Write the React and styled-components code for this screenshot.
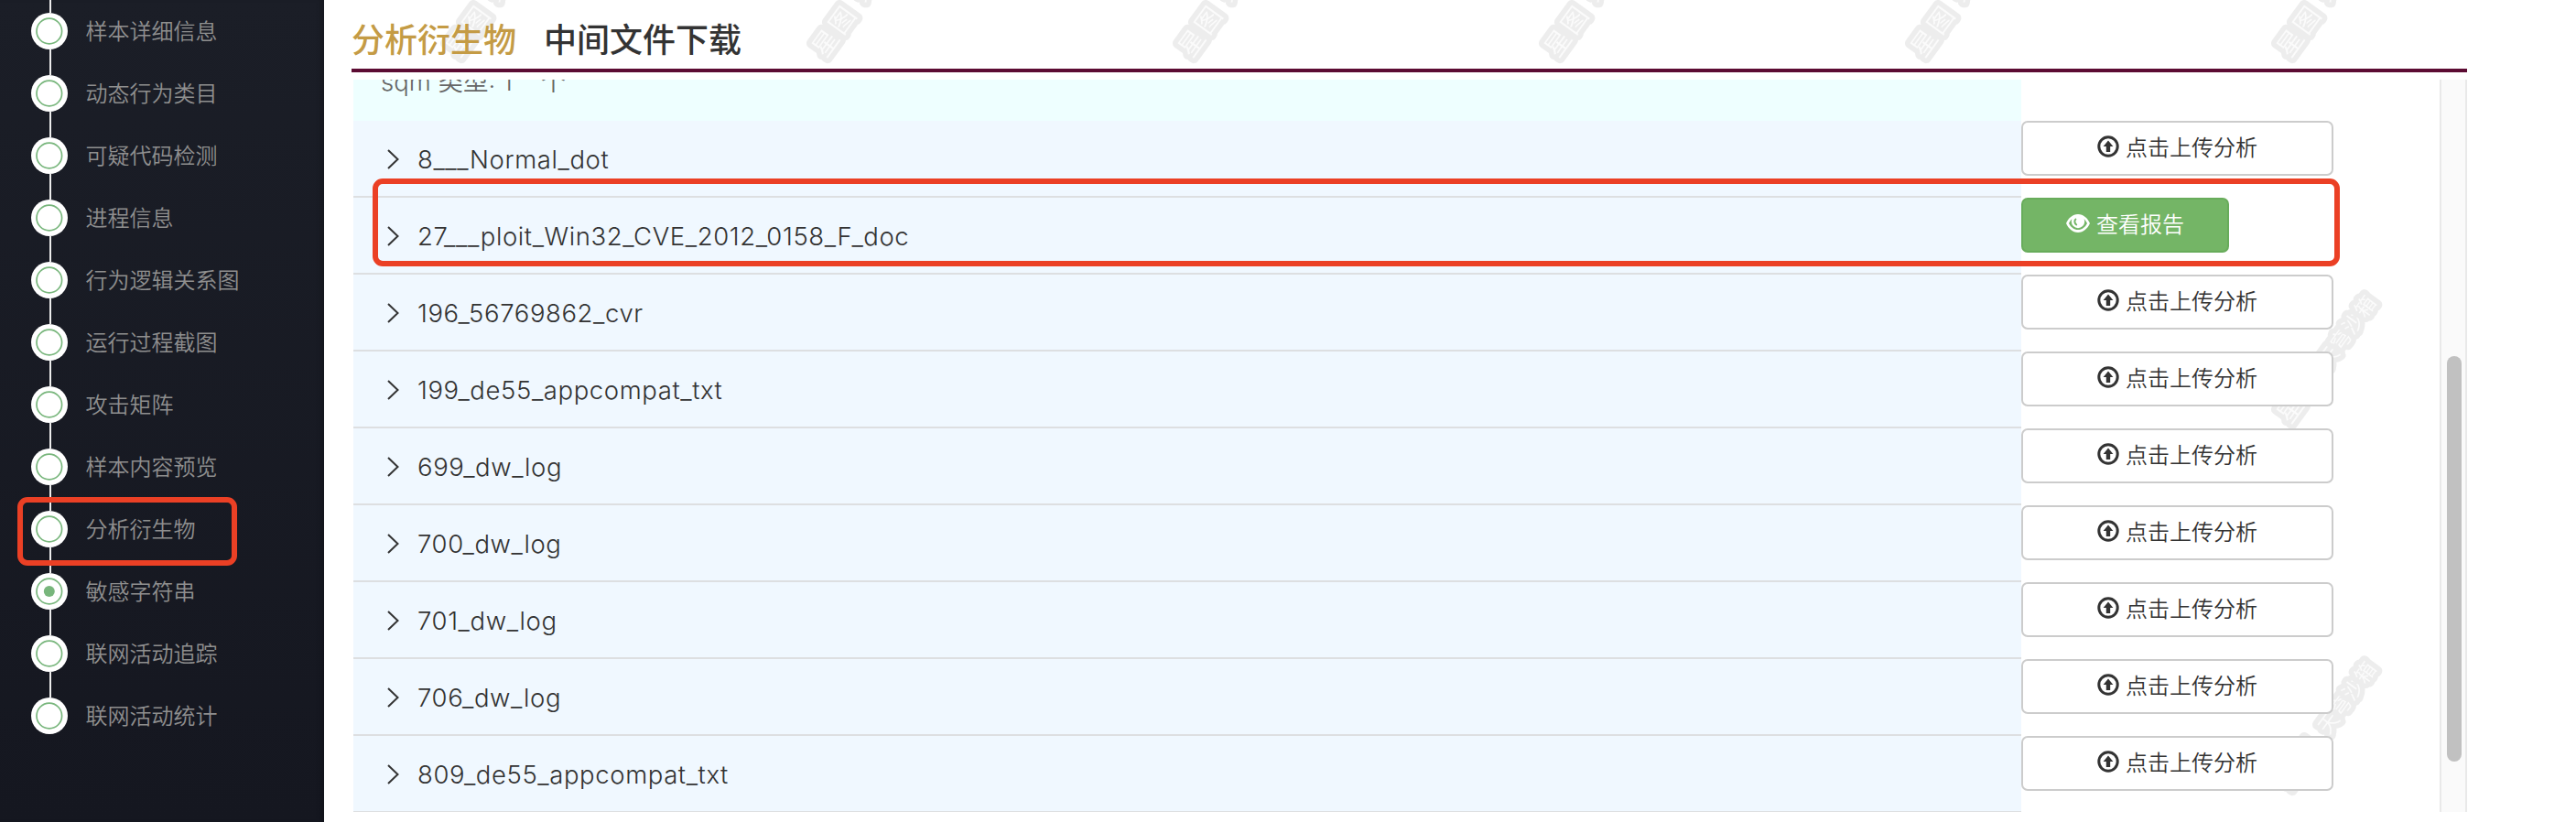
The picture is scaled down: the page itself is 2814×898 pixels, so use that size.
import React, { Component } from 'react';

// Import styled-components
import styled, { createGlobalStyle } from 'styled-components';

const GlobalStyle = createGlobalStyle`
    * {
        box-sizing: border-box;
    }

    body {
        margin: 0;
        background: #ffffff;
        color: #333333;
        font-family: Inter, "Noto Sans CJK SC", sans-serif;
    }
`

const StyledApp = styled.div`
    display: flex;
    position: relative;
    height: 898px;
    overflow: hidden;
`

// Watermark, tiled behind everything else
const StyledWatermark = styled.svg`
    position: absolute;
    top: 0;
    left: 0;
    width: 100%;
    height: 100%;
    z-index: -1;

    text {
        font-family: "Noto Sans CJK SC", sans-serif;
        font-weight: 400;
        fill: #fbfbfb;
        stroke: #ededed;
        stroke-width: 11px;
        stroke-linejoin: round;
        paint-order: stroke;
        text-anchor: middle;
    }
`

const StyledSidebar = styled.aside`
    width: 354px;
    flex: none;
    padding-top: 14px;
    background: linear-gradient(#1b1e27, #151720);
    box-shadow: inset -6px 0 6px -4px rgba(0, 0, 0, .25);
`

const StyledStep = styled.div`
    position: relative;
    display: flex;
    align-items: center;
    height: 40px;
    margin-bottom: 28px;
    padding-left: 34px;
    color: #8f8f8f;
    font-size: 24px;
    font-weight: 350;

    /* line that goes up to the previous step */
    &::before {
        content: "";
        position: absolute;
        left: 54px;
        bottom: 40px;
        width: 2px;
        height: 28px;
        background: #ececec;
    }

    > span {
        margin-left: 19.5px;
        padding-top: 2px;
        line-height: 40px;
    }
`

const StyledBullet = styled.div`
    display: flex;
    align-items: center;
    justify-content: center;
    width: 40px;
    height: 40px;
    border-radius: 50%;
    background: #ffffff;
`

// Red frame drawn over the highlighted element
const StyledMark = styled.div`
    position: absolute;
    left: ${({ $left }) => $left}px;
    top: ${({ $top }) => $top}px;
    width: ${({ $width }) => $width}px;
    height: ${({ $height }) => $height}px;
    border: 6px solid #eb4025;
    border-radius: 11px;
    pointer-events: none;
    z-index: 2;
`

const StyledMain = styled.main`
    width: 2311px;
    margin-left: 30px;
`

const StyledTabs = styled.nav`
    display: flex;
    gap: 30px;
    height: 79px;
    border-bottom: 4px solid #5c0c33;
    font-size: 36px;
    font-weight: 500;
    line-height: 88px;
`

const StyledTab = styled.span`
    color: ${({ $active }) => $active ? '#c49b45' : '#333333'};
`

const StyledPanel = styled.section`
    display: flex;
    justify-content: space-between;
    height: 800px;
    margin: 8px 0 0 2px;
    overflow: hidden;
`

const StyledSummary = styled.div`
    display: flex;
    align-items: flex-end;
    width: 1822px;
    height: 45px;
    padding: 0 0 23px 30px;
    overflow: hidden;
    background: #eeffff;
    color: #666666;
    font-size: 27.5px;
    font-weight: 350;
    line-height: 40px;
    white-space: pre;
`

const StyledRow = styled.div`
    display: flex;
    align-items: flex-start;
    height: 84px;
`

const StyledFile = styled.div`
    display: flex;
    align-items: center;
    width: 1822px;
    height: 84px;
    padding: 2px 0 0 37px;
    border-bottom: 2px solid #dddfe1;
    background: #f0f8ff;
    font-size: 27.5px;
    font-weight: 350;
    letter-spacing: .6px;

    > svg {
        margin-right: 20px;
    }
`

const StyledButton = styled.button`
    display: flex;
    align-items: center;
    justify-content: center;
    gap: 7px;
    width: ${({ $report }) => $report ? 227 : 341}px;
    height: 60px;
    padding: 0;
    border: 2px solid ${({ $report }) => $report ? '#68ac5b' : '#cccccc'};
    border-radius: 7px;
    background: ${({ $report }) => $report ? '#74b566' : '#ffffff'};
    color: ${({ $report }) => $report ? '#ffffff' : '#333333'};
    font-family: "Noto Sans CJK SC", sans-serif;
    font-size: 24px;
    font-weight: 350;
    cursor: pointer;

    > svg {
        margin-bottom: 5px;
    }

    > span {
        margin-bottom: 5px;
    }
`

const StyledScrollbar = styled.div`
    width: 30px;
    padding: 302px 4px 0 6px;
    border: solid #e9e9e9;
    border-width: 0 2px;
    background: #fafafa;
`

const StyledThumb = styled.div`
    width: 16px;
    height: 443px;
    border-radius: 8px;
    background: #c1c1c1;
`

const steps = [
    '样本详细信息',
    '动态行为类目',
    '可疑代码检测',
    '进程信息',
    '行为逻辑关系图',
    '运行过程截图',
    '攻击矩阵',
    '样本内容预览',
    '分析衍生物',
    '敏感字符串',
    '联网活动追踪',
    '联网活动统计'
];

const files = [
    { name: '8___Normal_dot' },
    { name: '27___ploit_Win32_CVE_2012_0158_F_doc', report: true },
    { name: '196_56769862_cvr' },
    { name: '199_de55_appcompat_txt' },
    { name: '699_dw_log' },
    { name: '700_dw_log' },
    { name: '701_dw_log' },
    { name: '706_dw_log' },
    { name: '809_de55_appcompat_txt' }
];

const Watermark = () => (
    <StyledWatermark aria-hidden="true">
        <defs>
            <pattern id="watermark" x="458" y="-150" width="400" height="400" patternUnits="userSpaceOnUse">
                <g transform="translate(44 197) rotate(-54)">
                    <text x="0" y="10" fontSize="28">星</text>
                    <text x="31" y="10" fontSize="28">图</text>
                    <text x="71" y="8" fontSize="22">天</text>
                    <text x="94" y="8" fontSize="22">穹</text>
                    <text x="116" y="8" fontSize="22">沙</text>
                    <text x="139" y="8" fontSize="22">箱</text>
                </g>
            </pattern>
        </defs>
        <rect width="100%" height="100%" fill="url(#watermark)" />
    </StyledWatermark>
)

const Bullet = ({ active }) => (
    <StyledBullet>
        <svg width="30" height="30" viewBox="0 0 30 30">
            <circle cx="14.8" cy="15" r="13.8" fill="none" stroke="#78b67c" strokeWidth="1.7" />
            { active ? <circle cx="14.8" cy="15" r="6" fill="#78b67c" /> : null }
        </svg>
    </StyledBullet>
)

const Chevron = () => (
    <svg width="13" height="22" viewBox="0 0 13 22">
        <path d="M1 1 L11.5 11 L1 21" fill="none" stroke="#333333" strokeWidth="2" />
    </svg>
)

const UploadIcon = () => (
    <svg width="24" height="24" viewBox="0 0 24 24">
        <circle cx="12" cy="12" r="10.2" fill="none" stroke="currentColor" strokeWidth="3" />
        <path d="M12 5.4 L17.4 12 H14.2 V18 H9.8 V12 H6.6 Z" fill="currentColor" />
    </svg>
)

const EyeIcon = () => (
    <svg width="26" height="20" viewBox="0 0 26 20">
        <path
            fillRule="evenodd"
            fill="currentColor"
            d="M13 0 C19 0 23.5 4.4 26 10 C23.5 15.6 19 20 13 20 C7 20 2.5 15.6 0 10 C2.5 4.4 7 0 13 0 Z
               M6.4 5.2 C4.9 6.5 3.9 8.1 3 10 C5.2 14.3 8.5 17 13 17 C17.5 17 20.8 14.3 23 10 C22.1 8.1 21.1 6.5 19.6 5.2 C20 6.2 20.2 7 20.2 8 A7.2 7.2 0 0 1 5.8 8 C5.8 7 6 6.2 6.4 5.2 Z"
        />
        <path d="M11 5 C8.6 6.5 8.8 10.3 11.8 12" fill="none" stroke="#74b566" strokeWidth="2" />
    </svg>
)

class App extends Component {

    // Rendu des étapes du menu
    renderSteps = () => {
        return steps.map((step, index) => (
            <StyledStep key={ step }>
                <Bullet active={ index === 9 } />
                <span>{ step }</span>
            </StyledStep>
        ));
    }

    // Rendu des fichiers
    renderFiles = () => {
        return files.map(({ name, report }) => (
            <StyledRow key={ name }>
                <StyledFile>
                    <Chevron />
                    <span>{ name }</span>
                </StyledFile>
                <StyledButton $report={ report }>
                    { report ? <EyeIcon /> : <UploadIcon /> }
                    <span>{ report ? '查看报告' : '点击上传分析' }</span>
                </StyledButton>
            </StyledRow>
        ));
    }

    render () {
        return (
            <StyledApp>
                <GlobalStyle />
                <Watermark />

                <StyledSidebar>
                    { this.renderSteps() }
                </StyledSidebar>

                <StyledMain>
                    <StyledTabs>
                        <StyledTab $active>分析衍生物</StyledTab>
                        <StyledTab>中间文件下载</StyledTab>
                    </StyledTabs>
                    <StyledPanel>
                        <div>
                            <StyledSummary>{ 'sqm 类型: 1    个' }</StyledSummary>
                            { this.renderFiles() }
                        </div>
                        <StyledScrollbar>
                            <StyledThumb />
                        </StyledScrollbar>
                    </StyledPanel>
                </StyledMain>

                <StyledMark $left={ 19 } $top={ 543 } $width={ 240 } $height={ 75 } />
                <StyledMark $left={ 407 } $top={ 195 } $width={ 2149 } $height={ 96 } />
            </StyledApp>
        )
    }

}

export default App;
